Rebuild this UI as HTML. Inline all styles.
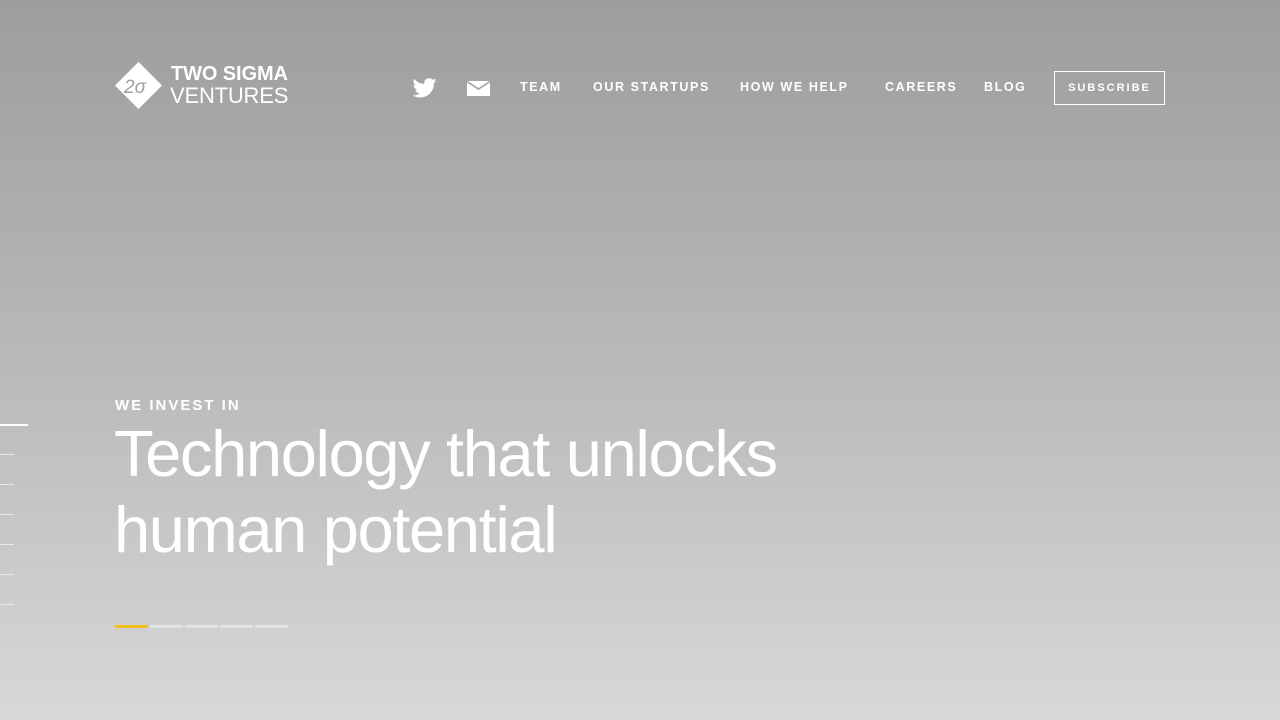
<!DOCTYPE html>
<html><head><style>
html,body{margin:0;padding:0}
body{width:1280px;height:720px;overflow:hidden;position:relative;background:linear-gradient(#9d9d9d 0%,#b3b3b3 40%,#c8c8ca 75%,#d8d8da 100%);font-family:"Liberation Sans",sans-serif;color:#fff}
.nav a{position:absolute;top:80px;font-size:12.5px;font-weight:bold;letter-spacing:1.6px;color:#fff;text-decoration:none}
.sub{position:absolute;left:1054px;top:71px;width:109px;height:32px;border:1px solid #fff;font-size:11px;font-weight:bold;letter-spacing:2px;text-align:center;line-height:32px}
.tick{position:absolute;left:0;width:14px;height:1px;background:#e8e8e8}
.h{position:absolute;left:114px;font-size:65px;font-weight:300;letter-spacing:-1.35px;line-height:76px}
.bar{position:absolute;top:625px;height:3px;width:33px;background:#e2e2e2}
</style></head><body>
<svg style="position:absolute;left:115px;top:62px" width="47" height="47" viewBox="0 0 47 47">
<polygon points="23.5,0 47,23.5 23.5,47 0,23.5" fill="#fff"/>
<text x="9" y="31" font-family="Liberation Sans" font-size="19" fill="#9f9f9f" font-style="italic">2σ</text>
</svg>
<div style="position:absolute;left:171px;top:63px;font-size:20px;font-weight:bold;line-height:22px;letter-spacing:-0.1px">TWO SIGMA</div>
<div style="position:absolute;left:170px;top:84px;font-size:22px;line-height:24px;letter-spacing:-0.2px">VENTURES</div>
<svg style="position:absolute;left:412px;top:78px" width="25" height="20" viewBox="0 0 24 20"><path fill="#fff" d="M24 2.4a9.8 9.8 0 0 1-2.8.8A4.9 4.9 0 0 0 23.3.5a9.9 9.9 0 0 1-3.1 1.2A4.9 4.9 0 0 0 11.8 6 14 14 0 0 1 1.7.9a4.9 4.9 0 0 0 1.5 6.6A4.9 4.9 0 0 1 1 6.9a4.9 4.9 0 0 0 3.900 4.9 4.9 4.9 0 0 1-2.2.1 4.9 4.9 0 0 0 4.6 3.4A9.9 9.9 0 0 1 0 17.3 14 14 0 0 0 7.5 19.5c9.1 0 14-7.5 14-14v-.6A10 10 0 0 0 24 2.4z"/></svg>
<svg style="position:absolute;left:467px;top:81px" width="23" height="15" viewBox="0 0 23 15"><rect width="23" height="15" fill="#fff"/><path d="M0 0.5L11.5 8L23 0.5" stroke="#a3a3a3" stroke-width="1.6" fill="none"/></svg>
<div class="nav">
<a style="left:520px">TEAM</a>
<a style="left:593px">OUR STARTUPS</a>
<a style="left:740px">HOW WE HELP</a>
<a style="left:885px">CAREERS</a>
<a style="left:984px">BLOG</a>
</div>
<div class="sub">SUBSCRIBE</div>
<div style="position:absolute;left:0;top:424px;width:28px;height:2px;background:#fff"></div>
<div class="tick" style="top:454px"></div><div class="tick" style="top:484px"></div><div class="tick" style="top:514px"></div><div class="tick" style="top:544px"></div><div class="tick" style="top:574px"></div><div class="tick" style="top:604px"></div>
<div style="position:absolute;left:115px;top:397px;font-size:15px;font-weight:bold;letter-spacing:2px">WE INVEST IN</div>
<div class="h" style="top:416px">Technology that unlocks</div>
<div class="h" style="top:492px">human potential</div>
<div class="bar" style="left:115px;background:#f0bf1a"></div>
<div class="bar" style="left:150px"></div><div class="bar" style="left:185px"></div><div class="bar" style="left:220px"></div><div class="bar" style="left:255px"></div>
</body></html>
